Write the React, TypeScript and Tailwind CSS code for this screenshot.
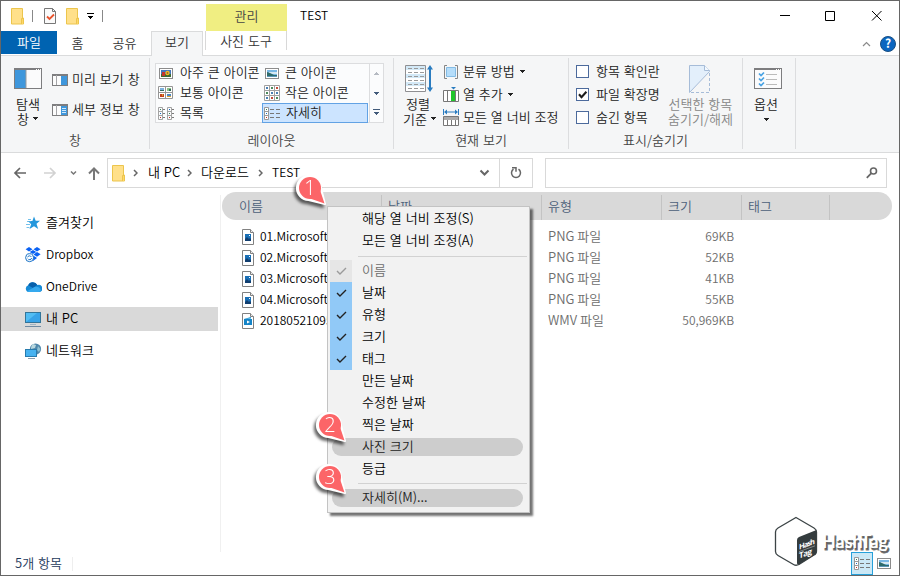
import type { ReactNode } from "react";
import clsx from "clsx";

interface IconProps {
  className?: string;
}

const Label = ({ className, children }: { className?: string; children: ReactNode }) => (
  <span className={clsx("pb-[2px] whitespace-nowrap", className)}>{children}</span>
);

const Folder = ({ className }: IconProps) => (
  <svg width="14" height="17" viewBox="0 0 14 17" className={clsx("shrink-0", className)}>
    <path d="M.5.5h11v9.5h1v6H.5z" fill="#ffe08a" stroke="#ecc54c" />
    <path d="M10.5 16v-5.5h2V16" fill="#ffd768" stroke="#ecc54c" />
  </svg>
);

const PaneIcon = ({ kind }: { kind: "nav" | "preview" | "details" }) => {
  if (kind === "nav") {
    return (
      <svg width="28" height="21" viewBox="0 0 28 21" className="shrink-0">
        <rect x=".5" y=".5" width="27" height="20" fill="#fbfbfc" stroke="#7d7d7f" />
        <path d="M1 1h26v1H1z" fill="#7d7d7f" />
        <path d="M22 1h1v1h-1zM24 1h1v1h-1zM26 1h1v1h-1z" fill="#fff" />
        <path d="M1 2h11v18H1z" fill="#3f97dc" />
        <path d="M12 2v18" stroke="#9a9a9c" />
      </svg>
    );
  }
  return (
    <svg width="16" height="12" viewBox="0 0 16 12" className="shrink-0">
      <rect x=".5" y=".5" width="15" height="11" fill="#fcfcfc" stroke="#7d7d7f" />
      <path d="M0 0h16v2H0z" fill="#7d7d7f" />
      <path d="M4.5 1v10" stroke="#a5a5a8" />
      <path d="M9 2h6v9H9z" fill="#3f97dc" />
      {kind === "details" && <path d="M10 4.5h4M10 6.5h4M10 8.5h4" stroke="#d3e9fa" />}
    </svg>
  );
};

const Photo = ({ big, className }: { big?: boolean; className?: string }) => (
  <svg width="14" height="11" viewBox="0 0 14 11" className={clsx("shrink-0", className)}>
    <rect x=".5" y=".5" width="13" height="10" fill="#fff" stroke="#8c8c8c" />
    {big ? (
      <>
        <path d="M2 2h10v7H2z" fill="#4376bd" />
        <path d="M2 6h10v3H2z" fill="#3d6a34" />
        <path d="M3 4h3v4H3z" fill="#c4362c" />
        <circle cx="8.5" cy="5" r="2.2" fill="#f0b823" />
        <circle cx="8.5" cy="5" r=".8" fill="#8b481f" />
      </>
    ) : (
      <>
        <path d="M2 2h10v7H2z" fill="#78b7e5" />
        <path d="M4 4h8v2H4z" fill="#d5e8f2" />
        <path d="M2 4l3 1 4 2h3v2H2z" fill="#2e6b6b" />
        <path d="M2 8h10v1H2z" fill="#5b96b8" />
      </>
    )}
  </svg>
);

const MediumGrid = () => (
  <svg width="15" height="13" viewBox="0 0 15 13" className="shrink-0">
    <path d="M.5.5h14v12H.5zM7.5 0v13M0 6.500h15" fill="#fff" stroke="#959595" />
    <path d="M2 2h4v3H2z" fill="#7cb2de" />
    <path d="M9 2h4v3H9z" fill="#8cc18a" />
    <path d="M2 8h4v3H2z" fill="#c2431f" />
    <path d="M9 8h4v3H9z" fill="#4b86c0" />
    <path d="M2 4h4v1H2zM11 3h2v2h-2z" fill="#33695b" />
    <path d="M4 8h1v2H4zM9 10h4v1H9z" fill="#d9a02c" />
  </svg>
);

const SmallGrid = () => (
  <svg width="16" height="16" viewBox="0 0 16 16" className="shrink-0">
    <path d="M.5.5h15v15H.5zM5.500 0v16M10.500 0v16M0 5.500h16M0 10.500h16" fill="#fff" stroke="#a0a0a0" />
    <path d="M2 2h2v2H2zM7 7h2v2H7zM12 7h2v2h-2zM2 12h2v2H2z" fill="#4a80b4" />
    <path d="M7 2h2v2H7zM2 7h2v2H2zM12 12h2v2h-2z" fill="#4b8a5c" />
    <path d="M12 2h2v2h-2zM7 12h2v2H7z" fill="#c4493a" />
  </svg>
);

const ListIcon = () => (
  <svg width="16" height="13" viewBox="0 0 16 13" className="shrink-0">
    <path d="M.5.5h4v12h-4zM9.5.5h4v12h-4zM0 4.5h5M0 8.5h5M9 4.5h5M9 8.5h5" fill="none" stroke="#a3a3a3" />
    <path d="M5 2.5h2M5 6.5h2M5 10.5h2M14 2.5h2M14 6.5h2M14 10.5h2" stroke="#7b7b7b" />
    <path d="M2 2h1v1H2zM11 6h1v1h-1z" fill="#368159" />
    <path d="M2 6h1v1H2zM11 2h1v1h-1z" fill="#1a6cc5" />
    <path d="M2 10h1v1H2zM11 10h1v1h-1z" fill="#c82d23" />
  </svg>
);

const DetailsIcon = () => (
  <svg width="16" height="13" viewBox="0 0 16 13" className="shrink-0">
    <path d="M.5.5h4v12h-4zM0 4.5h5M0 8.5h5" fill="#fff" stroke="#999" />
    <path d="M6 2.5h4M12 2.5h4M6 6.5h4M12 6.5h4M6 10.5h4M12 10.5h4" stroke="#777" />
    <path d="M2 2h1v1H2z" fill="#368159" />
    <path d="M2 6h1v1H2z" fill="#1a6cc5" />
    <path d="M2 10h1v1H2z" fill="#c82d23" />
  </svg>
);

const Caret = ({ className, color = "#222" }: { className?: string; color?: string }) => (
  <svg width="5" height="3" viewBox="0 0 5 3" className={clsx("shrink-0", className)}>
    <path d="M0 0h5v1H4v1H3v1H2V2H1V1H0z" fill={color} />
  </svg>
);

const Checkbox = ({ checked, label }: { checked?: boolean; label: string }) => (
  <div className="flex h-[23px] items-center">
    <svg width="13" height="13" viewBox="0 0 13 13" className="mr-[7px] shrink-0">
      <rect x=".5" y=".5" width="12" height="12" fill="#fff" stroke="#4c6a9c" />
      {checked && <path d="M3 6.3l2.5 2.8L10.4 3.8" fill="none" stroke="#1c1c1c" strokeWidth="2.1" />}
    </svg>
    <Label>{label}</Label>
  </div>
);

const Group = ({ label, className, children }: { label: string; className: string; children?: ReactNode }) => (
  <div className={clsx("my-[2px] flex h-[91px] shrink-0 flex-col border-r border-[#dcdddf]", className)}>
    <div className="flex h-[74px]">{children}</div>
    <div className="text-center leading-[15px] text-[#444]">{label}</div>
  </div>
);

const Crumb = ({ className }: IconProps) => (
  <svg width="5" height="8" viewBox="0 0 5 8" className={clsx("shrink-0", className)}>
    <path d="M1 1l3 3-3 3" fill="none" stroke="#666" strokeWidth="1.5" />
  </svg>
);

const FileIcon = ({ video }: { video?: boolean }) => (
  <svg width="12" height="16" viewBox="0 0 12 16" className="mr-[6px] shrink-0">
    <path d="M.5.5h8l3 3v12H.5z" fill="#fff" stroke="#818181" />
    <path d="M8.5.5v3h3" fill="#eee" stroke="#818181" />
    {video ? (
      <>
        <path d="M2 6l7-2v2h1v6H2z" fill="#1584c7" />
        <path d="M3 6l6-1v1z" fill="#78d1f2" />
        <path d="M5 7.5v3l3-1.5z" fill="#fff" />
      </>
    ) : (
      <>
        <path d="M3 5h6v7H3z" fill="#1b70b6" />
        <path d="M3 10l2-2 2 2 1-1 1 1v2H3z" fill="#123f70" />
        <path d="M7 6h1v1H7z" fill="#fff" />
      </>
    )}
  </svg>
);

const Star = () => (
  <svg width="16" height="16" viewBox="0 0 16 16">
    <path d="M9 1.500l1.700 4.300 4.300-.1-3.500 3 1.700 5.200-4.200-2.600L4.500 14l1.700-4.700L3 6l4.400-.1z" fill="#2497dc" />
    <path d="M2 6.500h4M1 9.500h4M1.500 12.500h3M3 4.500h3" stroke="#4fb1e6" strokeWidth=".8" />
  </svg>
);

const Dropbox = () => (
  <svg width="17" height="16" viewBox="0 0 17 16">
    <path d="M4 0l3.5 2.3L4 4.6.6 2.3zM12 0l3.6 2.3L12 4.6 8.5 2.3zM8 2.9l3.3 2L8 7 4.7 4.9zM12 5l3.6 2.3L12 9.7 8.5 7.4z" fill="#0a62f4" />
    <path d="M9 9l3 2-4 3-1-4z" fill="#0a62f4" />
    <circle cx="4.6" cy="10.7" r="4" fill="#fff" stroke="#1771c5" />
    <path d="M2.6 10.3a2 2 0 013.7-.4M6.6 11.1a2 2 0 01-3.7.6" fill="none" stroke="#1771c5" />
  </svg>
);

const Cloud = () => (
  <svg width="17" height="12" viewBox="0 0 17 12">
    <path d="M4 11a3.5 3.5 0 01-.8-6.8A5 5 0 0112.3 4 3.7 3.7 0 0115 11z" fill="#168ad6" />
    <path d="M3.2 4.2A5 5 0 0112.3 4L8 7z" fill="#0760ab" />
    <path d="M2 10.3L9.5 6c2-1 6 0 6.3 3-.2 1.4-1.2 2-2.3 2H4c-1 0-1.6-.2-2-.7z" fill="#35a9ee" />
  </svg>
);

const Computer = () => (
  <svg width="17" height="16" viewBox="0 0 17 16">
    <rect x=".5" y="1.5" width="15" height="10" fill="#52bdf3" stroke="#337599" />
    <path d="M1 11L12 2h3v9z" fill="#38a3e8" />
    <path d="M5 13.5h6" stroke="#a3b5c3" />
    <path d="M0 15.5h16" stroke="#708ba2" />
  </svg>
);

const Network = () => (
  <svg width="17" height="16" viewBox="0 0 17 16">
    <circle cx="10.5" cy="6" r="5.6" fill="#4f87ab" />
    <path d="M8 1l3 1-1 3-4 1c0-2 .5-4 2-5z" fill="#b9d8df" />
    <path d="M13 3l2.500 3-1.500 3-2-2z" fill="#8fc0d2" />
    <rect x=".5" y="6.5" width="11" height="7" fill="#46b2f0" stroke="#287bad" />
    <path d="M3 15.5h7" stroke="#8a9dac" />
  </svg>
);

const Pin = ({ n, className }: { n: number; className: string }) => (
  <svg
    width="38"
    height="38"
    viewBox="0 0 38 38"
    className={clsx("absolute z-20 drop-shadow-[-2px_3px_1.5px_rgba(0,0,0,.6)]", className)}
  >
    <path d="M26.9 14.5L31 31 14.5 27A12 12 0 1126.9 14.5z" fill="#fff" stroke="#fff" strokeWidth="2" strokeLinejoin="round" />
    <circle cx="16" cy="15" r="11" fill="#fc6568" />
    <path d="M26 17l4.5 13.5L16 25.5z" fill="#fc6568" />
    <text x="16" y="22.3" textAnchor="middle" fill="#fff" fontSize="20" fontFamily="Open Sans, sans-serif">
      {n}
    </text>
  </svg>
);

const sidebar = [
  { label: "즐겨찾기", icon: <Star /> },
  { label: "Dropbox", icon: <Dropbox />, latin: true },
  { label: "OneDrive", icon: <Cloud />, latin: true },
  { label: "내 PC", icon: <Computer />, active: true },
  { label: "네트워크", icon: <Network /> },
];

const files = [
  { name: "01.Microsoft", type: "PNG 파일", size: "69KB" },
  { name: "02.Microsoft", type: "PNG 파일", size: "52KB" },
  { name: "03.Microsoft", type: "PNG 파일", size: "41KB" },
  { name: "04.Microsoft", type: "PNG 파일", size: "55KB" },
  { name: "20180521095", type: "WMV 파일", size: "50,969KB", video: true },
];

const menu: { label?: string; checked?: boolean; disabled?: boolean; marked?: boolean }[] = [
  { label: "해당 열 너비 조정(S)" },
  { label: "모든 열 너비 조정(A)" },
  {},
  { label: "이름", checked: true, disabled: true },
  { label: "날짜", checked: true },
  { label: "유형", checked: true },
  { label: "크기", checked: true },
  { label: "태그", checked: true },
  { label: "만든 날짜" },
  { label: "수정한 날짜" },
  { label: "찍은 날짜" },
  { label: "사진 크기", marked: true },
  { label: "등급" },
  {},
  { label: "자세히(M)...", marked: true },
];

const ContextMenu = () => (
  <div className="absolute top-[205px] left-[326px] z-10 flex h-[307px] w-[203px] flex-col border border-[#c3c3c3] bg-[#f2f2f2] p-px shadow-[3px_3px_2px_rgba(0,0,0,.55)]">
    {menu.map((item, i) =>
      item.label ? (
        <div
          key={i}
          className={clsx("flex h-[22px] shrink-0 items-center", item.disabled ? "text-[#6d6d6d]" : "text-black")}
        >
          <div
            className={clsx(
              "ml-px flex h-full w-[22px] shrink-0 items-center justify-center",
              item.checked && (item.disabled ? "bg-[#e6e6e6]" : "bg-[#91c9f7]")
            )}
          >
            {item.checked && (
              <svg width="11" height="8" viewBox="0 0 11 8">
                <path d="M1 4l3 3 6-6" fill="none" stroke={item.disabled ? "#9a9a9a" : "#222"} strokeWidth="1.4" />
              </svg>
            )}
          </div>
          <div
            className={clsx(
              "-ml-[20px] h-[18px] w-[191px] shrink-0 rounded-full pl-[30px] leading-[15px]",
              item.marked && "bg-[#cdcdcd] text-[#222]"
            )}
          >
            {item.label}
          </div>
        </div>
      ) : (
        <div key={i} className={clsx("mr-[1px] ml-[29px] shrink-0", i === 2 ? "h-[8px] pt-[4px]" : "h-[7px] pt-[3px]")}>
          <div className="h-px bg-[#d2d2d2]" />
        </div>
      )
    )}
  </div>
);

const TitleBar = () => (
  <div className="flex h-[30px] shrink-0 items-center">
    <Folder className="ml-[10px]" />
    <div className="ml-[7px] h-[12px] w-px bg-[#888]" />
    <svg width="13" height="16" viewBox="0 0 13 16" className="ml-[11px] shrink-0">
      <path d="M.5.5h8l3 3v12H.5z" fill="#fafafa" stroke="#777" />
      <path d="M8.5.5v3h3" fill="none" stroke="#777" />
      <path d="M3 8.5l2.5 2.5L10 6.5" fill="none" stroke="#e9532c" strokeWidth="1.8" />
    </svg>
    <Folder className="ml-[9px]" />
    <svg width="7" height="7" viewBox="0 0 7 7" className="ml-[7px] shrink-0">
      <path d="M0 0h7v1H0zM1 3h5v1H5v1H4v1H3V5H2V4H1z" fill="#000" />
    </svg>
    <div className="ml-[8px] h-[12px] w-px bg-[#888]" />
    <div className="ml-[103px] flex h-[27px] w-[81px] shrink-0 items-center justify-center self-end bg-[#f0ee82] pb-[3px] text-[#444]">
      관리
    </div>
    <Label className="ml-[13px] text-[12px]">TEST</Label>
    <svg width="102" height="12" viewBox="0 0 102 12" className="mr-[17px] ml-auto shrink-0">
      <path d="M0 5.5h10M45.5 1.5h9v9h-9zM92 1l9.5 9.5M101.500 1L92 10.500" fill="none" stroke="#000" />
    </svg>
  </div>
);

const TabBar = () => (
  <div className="relative z-[1] -mb-px flex h-[25px] shrink-0 items-center text-[#333]">
    <div className="flex h-[23px] w-[56px] items-center justify-center self-start bg-[#0063b1] text-white">
      <Label>파일</Label>
    </div>
    <Label className="w-[41px] text-center">홈</Label>
    <Label className="w-[53px] text-center">공유</Label>
    <div className="flex h-[25px] w-[52px] items-center justify-center self-start border border-b-0 border-[#dadbdc] bg-[#f5f6f7] pb-[4px]">
      보기
    </div>
    <div className="ml-[2px] h-[19px] w-[82px] self-start border-x border-[#d8d8d8] text-center leading-[20px]">사진 도구</div>
    <svg width="9" height="6" viewBox="0 0 9 6" className="ml-auto">
      <path d="M1 5l3.500-3.500L8 5" fill="none" stroke="#8a8a8a" strokeWidth="1.2" />
    </svg>
    <div className="mr-[3px] ml-[9px] flex h-[16px] w-[16px] items-center justify-center rounded-full border border-[#194f83] bg-[#0b66c0] pb-px text-[12px] font-bold text-white">
      ?
    </div>
  </div>
);

const Ribbon = () => (
  <div className="flex h-[98px] shrink-0 border-y border-[#dadbdc] bg-[#f5f6f7] text-[#222]">
    <Group label="창" className="w-[149px]">
      <div className="flex w-[44px] shrink-0 flex-col pt-[10px] pl-[13px]">
        <PaneIcon kind="nav" />
        <div className="mt-[7px] w-[28px] leading-[15px]">
          <div className="text-center whitespace-nowrap">탐색</div>
          <div className="flex items-center pl-[3px]">
            창
            <Caret className="ml-[4px]" />
          </div>
        </div>
      </div>
      <div className="flex flex-col gap-[7px] pt-[10px] pl-[7px]">
        <div className="flex h-[23px] items-center gap-[4px]">
          <PaneIcon kind="preview" />
          <Label>미리 보기 창</Label>
        </div>
        <div className="flex h-[23px] items-center gap-[4px]">
          <PaneIcon kind="details" />
          <Label>세부 정보 창</Label>
        </div>
      </div>
    </Group>

    <Group label="레이아웃" className="w-[244px]">
      <div className="mt-[5px] ml-[5px] flex h-[60px] w-[229px] border border-[#dcdddf] bg-[#fbfcfd]">
        <div className="grid w-[213px] grid-cols-[106px_106px] grid-rows-[18px_21px_20px] whitespace-nowrap">
          <div className="flex items-center pl-[3px]">
            <Photo big className="mr-[7px]" />
            <Label>아주 큰 아이콘</Label>
          </div>
          <div className="flex items-center pl-[3px]">
            <Photo className="mr-[6px]" />
            <Label>큰 아이콘</Label>
          </div>
          <div className="flex items-center gap-[7px] pl-[2px]">
            <MediumGrid />
            <Label>보통 아이콘</Label>
          </div>
          <div className="flex items-center gap-[5px] pl-[2px]">
            <SmallGrid />
            <Label>작은 아이콘</Label>
          </div>
          <div className="flex items-center gap-[6px] pl-[2px]">
            <ListIcon />
            <Label>목록</Label>
          </div>
          <div className="flex items-center gap-[6px] border border-[#62a2e4] bg-[#cce4ff] pl-[1px]">
            <DetailsIcon />
            <Label>자세히</Label>
          </div>
        </div>
        <div className="flex w-[14px] flex-col items-center border-l border-[#dcdddf]">
          <Caret className="mt-[8px] rotate-180" color="#b5bac2" />
          <Caret className="mt-[17px]" color="#425b7b" />
          <svg width="7" height="6" viewBox="0 0 7 6" className="mt-[14px]">
            <path d="M0 0h7v1H0zM1 3h5v1H5v1H4v1H3V5H2V4H1z" fill="#425b7b" />
          </svg>
        </div>
      </div>
    </Group>

    <Group label="현재 보기" className="w-[175px]">
      <div className="flex w-[44px] shrink-0 flex-col pt-[7px] pl-[9px]">
        <svg width="30" height="28" viewBox="0 0 30 28" className="ml-[2px]">
          <path d="M.5.5h20v26H.5z" fill="#fff" stroke="#8f8f92" />
          <path d="M1 1h19v4H1zM1 9h19v4H1zM1 17h19v4H1z" fill="#d3e9f7" />
          <path d="M3 3.500h16M3 7.500h16M3 11.500h16M3 15.500h16M3 19.500h16M3 23.500h16" stroke="#999" strokeDasharray="4 2" />
          <path d="M25 2v23" stroke="#2a7cc0" strokeWidth="2" />
          <path d="M22 4.500L25 0l3 4.500zM22 22.500l3 4.500 3-4.500z" fill="#2a7cc0" />
        </svg>
        <div className="mt-[3px] w-[34px] leading-[15px]">
          <div className="pl-[3px] whitespace-nowrap">정렬</div>
          <div className="flex items-center whitespace-nowrap">
            기준
            <Caret className="ml-[4px]" />
          </div>
        </div>
      </div>
      <div className="flex flex-col pt-[2px] pl-[5px] whitespace-nowrap">
        <div className="flex h-[23px] items-center">
          <svg width="16" height="14" viewBox="0 0 16 14" className="mr-[4px]">
            <path d="M4 .5H1.500v13H4M12 .5h2.500v13H12" fill="none" stroke="#858585" />
            <path d="M3.500 2.500h9v9h-9z" fill="#b5ddfa" stroke="#85bce4" />
          </svg>
          <Label>분류 방법</Label>
          <Caret className="ml-[5px]" />
        </div>
        <div className="flex h-[23px] items-center">
          <svg width="16" height="16" viewBox="0 0 16 16" className="mr-[4px]">
            <path d="M.5 3.500h15v11H.5zM4.500 3v11M8.500 3v11M12.500 3v11" fill="#fff" stroke="#777" />
            <path d="M8 4h4v10H8z" fill="#20c52b" />
            <path d="M8 0h5l-2.500 2.500z" fill="#2a7cc0" />
          </svg>
          <Label>열 추가</Label>
          <Caret className="ml-[5px]" />
        </div>
        <div className="flex h-[23px] items-center">
          <svg width="16" height="17" viewBox="0 0 16 17" className="mr-[4px]">
            <path d="M.5 0v6M15.500 0v6M2 3h12" stroke="#2a7cc0" />
            <path d="M1 3l3-2.500v5zM15 3L12 .5v5z" fill="#2a7cc0" />
            <path d="M.5 7.500h15v9H.5zM4.500 11v5M8.500 11v5M12.500 11v5" fill="#fff" stroke="#777" />
            <path d="M1 8h14v3H1z" fill="#aaa" />
          </svg>
          <Label>모든 열 너비 조정</Label>
        </div>
      </div>
    </Group>

    <Group label="표시/숨기기" className="w-[174px]">
      <div className="flex w-[99px] flex-col pt-[2px] pl-[7px]">
        <Checkbox label="항목 확인란" />
        <Checkbox checked label="파일 확장명" />
        <Checkbox label="숨긴 항목" />
      </div>
      <div className="flex flex-col items-center pt-[7px] leading-[15px] whitespace-nowrap text-[#868686]">
        <svg width="22" height="28" viewBox="0 0 22 28" className="mb-[3px]">
          <path d="M.5 27.500V.5h15l5 5v1z" fill="#e3effb" stroke="#a6bcd8" />
          <path d="M15.500.5v5h5" fill="#f4f9fe" stroke="#a6bcd8" />
          <path d="M20.500 8v19.500H1" fill="none" stroke="#a6bcd8" strokeDasharray="3 2" />
        </svg>
        <div>선택한 항목</div>
        <div>숨기기/해제</div>
      </div>
    </Group>

    <Group label="" className="w-[53px]">
      <div className="flex w-full flex-col pt-[10px] pl-[11px] leading-[15px]">
        <svg width="28" height="21" viewBox="0 0 28 21" className="mb-[7px]">
          <rect x=".5" y=".5" width="27" height="20" fill="#fbfbfc" stroke="#7d7d7f" />
          <path d="M0 0h28v2H0z" fill="#7d7d7f" />
          <path d="M22 1h1v1h-1zM24 1h1v1h-1zM26 1h1v1h-1z" fill="#fff" />
          <path d="M12 6.500h11M12 11.500h11M12 16.500h11" stroke="#bbb" />
          <path d="M5 5.500L7 7.500l3-3M5 10.500l2 2 3-3M5 15.500l2 2 3-3" fill="none" stroke="#4aa3e4" strokeWidth="1.7" />
        </svg>
        옵션
        <Caret className="mt-[7px] ml-[10px]" />
      </div>
    </Group>
  </div>
);

const AddressBar = () => (
  <div className="flex h-[39px] shrink-0 items-start pt-[5px]">
    <svg width="106" height="30" viewBox="0 0 106 30" fill="none" className="shrink-0">
      <path d="M25 15H14M19 10l-5 5 5 5" stroke="#666" strokeWidth="1.700" />
      <path d="M43 15h11M49 10l5 5-5 5" stroke="#d2d2d2" strokeWidth="1.700" />
      <path d="M70 13.500l2.500 2.500 2.500-2.500" stroke="#777" strokeWidth="1.500" />
      <path d="M93 22V11M88 15.500l5-5 5 5" stroke="#777" strokeWidth="2" />
    </svg>
    <div className="flex h-[30px] w-[426px] shrink-0 items-center border border-[#d9d9d9]">
      <Folder className="ml-[4px]" />
      <Crumb className="ml-[7px]" />
      <Label className="ml-[10px] w-[39px]">내 PC</Label>
      <Crumb />
      <Label className="ml-[9px] w-[57px]">다운로드</Label>
      <Crumb className="mr-[9px]" />
      <Label className="text-[12px]">TEST</Label>
      <svg width="11" height="8" viewBox="0 0 11 8" className="mr-[9px] ml-auto">
        <path d="M1.500 1.500l4 4 4-4" fill="none" stroke="#666" strokeWidth="2" />
      </svg>
      <div className="flex h-full w-[33px] items-center justify-center border-l border-[#d9d9d9]">
        <svg width="12" height="12" viewBox="0 0 12 12">
          <path d="M3.500 2.200A4.500 4.500 0 108.500 2.200" fill="none" stroke="#666" strokeWidth="1.500" />
          <path d="M2 .8h4v4" fill="none" stroke="#666" strokeWidth="1.500" />
        </svg>
      </div>
    </div>
    <div className="ml-[12px] flex h-[30px] w-[342px] items-center justify-end border border-[#d9d9d9] pr-[8px]">
      <svg width="12" height="12" viewBox="0 0 12 12">
        <circle cx="7.500" cy="4" r="3" fill="none" stroke="#666" strokeWidth="1.600" />
        <path d="M5.400 6.200L.8 10.800" stroke="#666" strokeWidth="1.800" />
      </svg>
    </div>
  </div>
);

const Logo = () => (
  <svg width="120" height="54" viewBox="0 0 120 54" className="absolute top-[514px] left-[772px]">
    <path d="M23 2.500l18 10.500q2.500 1.500 2.500 4v19q0 3-2.500 4L26 49.500q-3 1.500-5.500 0L5 40.500q-2.500-1.500-2.500-4V17q0-2.500 2.500-4z" fill="#fff" stroke="#3c4446" strokeWidth="1.300" />
    <path d="M24 25q0-2 2-3l17.500-7v22q0 2-2 3L26 49.500q-2 1-2-1.500z" fill="#343c3e" />
    <g transform="translate(25 35) skewY(-20)" fill="#fff" fontFamily="Open Sans, sans-serif" fontWeight="700">
      <text x="1" y="0" fontSize="7.500" textLength="16">Hash</text>
      <path d="M1 2h16" stroke="#ccc" strokeWidth=".5" />
      <text x="1" y="9" fontSize="8" textLength="13">Tag</text>
    </g>
    <g fontFamily="Lato, sans-serif" fontSize="19" fontWeight="700">
      <text x="50.500" y="34.500" textLength="66" lengthAdjust="spacingAndGlyphs" fill="#555" stroke="#777" strokeWidth=".8">HashTag</text>
      <text x="49" y="33" textLength="66" lengthAdjust="spacingAndGlyphs" fill="#fff">HashTag</text>
    </g>
  </svg>
);

export default function App() {
  return (
    <div className="relative flex h-[576px] w-[900px] flex-col overflow-hidden border border-[#666] bg-white font-['Noto_Sans_CJK_KR',sans-serif] text-[13px] leading-[18px] font-[350] text-black [word-spacing:1px]">
      <TitleBar />
      <TabBar />
      <Ribbon />
      <AddressBar />

      <div className="flex h-[360px] shrink-0">
        <div className="flex w-[217px] shrink-0 flex-col gap-[8px] pt-[19px]">
          {sidebar.map((item) => (
            <div key={item.label} className={clsx("flex h-[24px] items-center", item.active && "bg-[#d9d9d9]")}>
              <div className="mr-[4px] ml-[24px] w-[17px]">{item.icon}</div>
              <Label className={clsx(item.latin && "text-[12px]")}>{item.label}</Label>
            </div>
          ))}
        </div>
        <div className="mt-[3px] ml-[2px] w-px bg-[#f0f0f0]" />
        <div className="ml-[1px] w-[670px]">
          <div className="flex h-[28px] overflow-hidden rounded-full bg-[#d9d9d9] pt-[3px] leading-[22px] text-[#4c607a]">
            <div className="w-[160px] border-r border-[#c3c3c3] pl-[17px]">이름</div>
            <div className="w-[160px] border-r border-[#c3c3c3] pl-[6px]">날짜</div>
            <div className="w-[120px] border-r border-[#c3c3c3] pl-[6px]">유형</div>
            <div className="w-[80px] border-r border-[#c3c3c3] pl-[6px]">크기</div>
            <div className="w-[88px] border-r border-[#c3c3c3] pl-[6px]">태그</div>
          </div>
          <div className="pt-[6px] [word-spacing:0]">
            {files.map((f) => (
              <div key={f.name} className="flex h-[21px] items-center whitespace-nowrap text-[#6d6d6d]">
                <div className="flex w-[326px] items-center pl-[20px] text-[12px] text-black">
                  <FileIcon video={f.video} />
                  <Label>{f.name}</Label>
                </div>
                <Label className="w-[100px]">{f.type}</Label>
                <Label className="w-[86px] text-right text-[12px]">{f.size}</Label>
              </div>
            ))}
          </div>
        </div>
      </div>

      <div className="relative flex h-[23px] shrink-0 items-center">
        <div className="w-[72px] border-r border-[#eee] pb-[2px] pl-[14px] leading-[12px] text-[#1e395b]">5개 항목</div>
        <div className="ml-auto flex h-[23px] w-[22px] items-center justify-center border border-[#26a0da] bg-[#cbe8f6]">
          <DetailsIcon />
        </div>
        <Photo className="mr-[8px] ml-[4px]" />
      </div>

      <Logo />
      <ContextMenu />
      <Pin n={1} className="top-[172px] left-[293px]" />
      <Pin n={2} className="top-[409px] left-[313px]" />
      <Pin n={3} className="top-[461px] left-[313px]" />
    </div>
  );
}
